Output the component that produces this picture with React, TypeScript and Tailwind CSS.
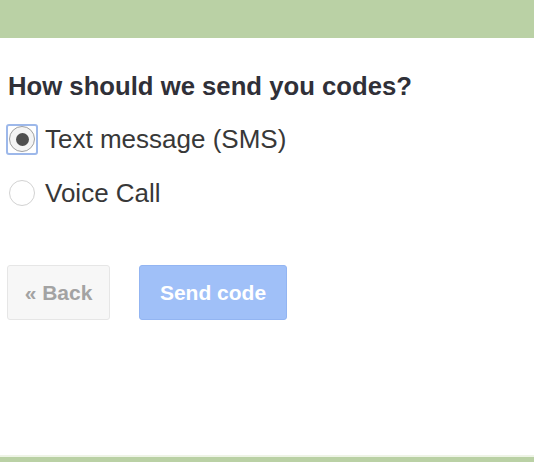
import React, { useState } from 'react';

const options = [
  { id: 'sms', label: 'Text message (SMS)' },
  { id: 'voice', label: 'Voice Call' },
];

export default function App() {
  const [method, setMethod] = useState('sms');

  return (
    <div className="h-[462px] w-full flex flex-col bg-white font-['Liberation_Sans',Arial,sans-serif]">
      <div className="h-[38px] bg-[#bad1a5]" />

      <div className="flex-1 pl-[8px]">
        <h1 className="mt-[33px] text-[25.7px] leading-[30px] font-bold text-[#303038]">
          How should we send you codes?
        </h1>

        <div className="mt-[22px] flex flex-col gap-[22px]">
          {options.map((o) => {
            const checked = method === o.id;
            return (
              <label
                key={o.id}
                onClick={() => setMethod(o.id)}
                className="flex items-center -ml-[2px] cursor-pointer"
              >
                <span
                  className={`w-[32px] h-[31px] flex items-center justify-center rounded-[3px] border-2 ${
                    checked ? 'border-[#9db8ea]' : 'border-transparent'
                  }`}
                >
                  <span
                    className={`w-[26px] h-[26px] rounded-full flex items-center justify-center border ${
                      checked ? 'border-[#a0a0a0] bg-[#f4f4f4]' : 'border-[#d2d2d2] bg-white'
                    }`}
                  >
                    {checked && <span className="w-[13px] h-[13px] rounded-full bg-[#4f4f4f]" />}
                  </span>
                </span>
                <span className="ml-[7px] text-[26px] leading-[32px] text-[#383838]">{o.label}</span>
              </label>
            );
          })}
        </div>

        <div className="mt-[56px] flex gap-[29px] -ml-[1px]">
          <button className="w-[103px] h-[55px] rounded-[3px] border border-[#e6e6e6] bg-[#f7f7f7] text-[21px] font-bold text-[#a3a3a3]">
            « Back
          </button>
          <button className="w-[148px] h-[55px] rounded-[3px] border border-[#93b5f2] bg-[#a0c0f8] text-[21px] font-bold text-white">
            Send code
          </button>
        </div>
      </div>

      <div className="h-[2px] bg-[#eef4e6]" />
      <div className="h-[5px] bg-[#bad1a5]" />
    </div>
  );
}
